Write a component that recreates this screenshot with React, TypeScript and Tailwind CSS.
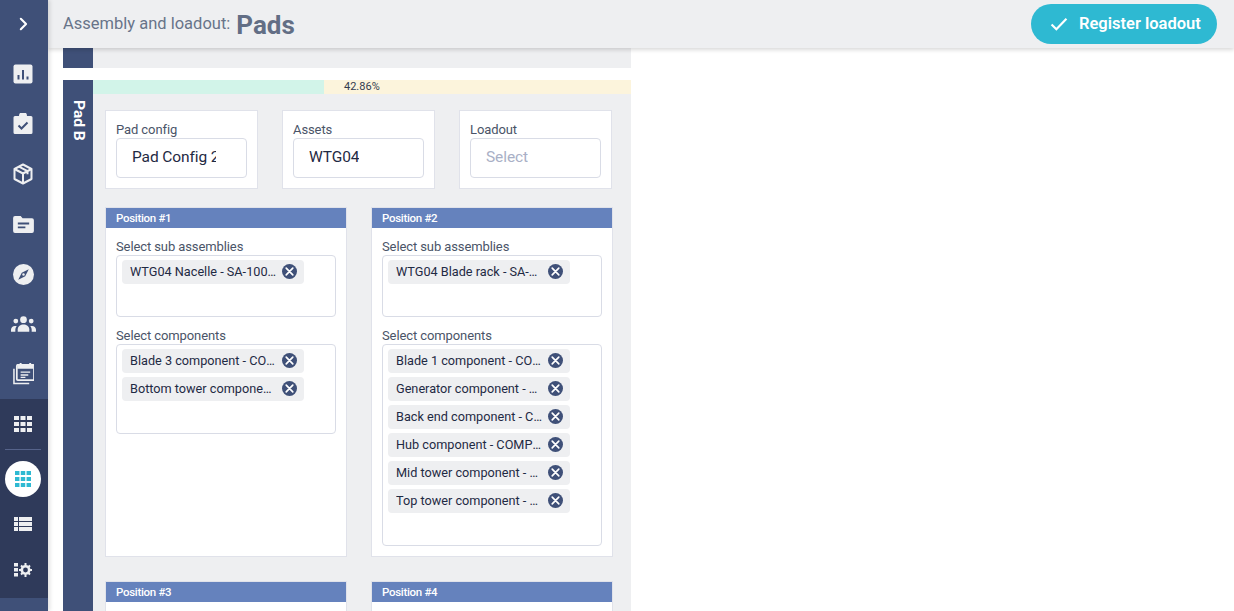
import { ReactNode } from "react";

const sans = "font-['Roboto',sans-serif]";

function Chip({ label }: { label: string }) {
  return (
    <div className="flex h-6 w-[182px] items-center justify-between gap-1 rounded bg-[#eeeff1] pl-2 pr-[7px]">
      <span className="truncate text-[12.700px] text-[#1f2a44]">{label}</span>
      <svg viewBox="0 0 16 16" className="h-[15px] w-[15px] shrink-0 -translate-y-px">
        <circle cx="8" cy="8" r="8" fill="#3f5078" />
        <path d="M4.500 4.500l7 7M11.500 4.500l-7 7" stroke="#fff" strokeWidth="1.800" strokeLinecap="round" />
      </svg>
    </div>
  );
}

function MultiSelect({ label, items, height }: { label: string; items: string[]; height: string }) {
  return (
    <div>
      <div className="pt-px text-[13px] leading-[17px] tracking-[-0.1px] text-[#4a5468]">{label}</div>
      <div className={`flex flex-col gap-1 rounded border border-[#d9dce6] bg-white pl-[5px] pt-1 ${height}`}>
        {items.map((item) => (
          <Chip key={item} label={item} />
        ))}
      </div>
    </div>
  );
}

function Position({ title, subs, comps, compHeight, tall }: { title: string; subs?: string[]; comps?: string[]; compHeight?: string; tall?: boolean }) {
  return (
    <div className={`w-[242px] border border-[#e0e2ea] bg-white ${tall ? "h-[350px]" : "h-[120px]"}`}>
      <div className="h-5 bg-[#6582bd] pl-2.5 text-[11.500px] font-medium leading-5 tracking-[-0.3px] text-white">{title}</div>
      {subs && comps && (
        <div className="flex flex-col gap-[9px] px-2.5 pt-[9px]">
          <MultiSelect label="Select sub assemblies" items={subs} height="h-[62px]" />
          <MultiSelect label="Select components" items={comps} height={compHeight ?? ""} />
        </div>
      )}
    </div>
  );
}

function ConfigSelect({ label, value, muted }: { label: string; value: string; muted?: boolean }) {
  return (
    <div className="h-[79px] w-[153px] border border-[#e0e2ea] bg-white px-2.5 pt-[9px]">
      <div className="pt-px text-[13px] leading-[17px] tracking-[-0.1px] text-[#4a5468]">{label}</div>
      <div className="flex h-10 items-center overflow-hidden rounded border border-[#d9dce6] pl-[15px] pr-[30px]">
        <span className={`overflow-hidden whitespace-nowrap text-[15.500px] tracking-[-0.1px] ${muted ? "text-[#a9b0c6]" : "text-[#1f2a44]"}`}>{value}</span>
      </div>
    </div>
  );
}

function NavIcon({ children }: { children: ReactNode }) {
  return <div className="flex h-[50.2px] items-center justify-center text-[#eeeff1]">{children}</div>;
}

const Grid = ({ color, className }: { color: string; className: string }) => (
  <svg viewBox="0 0 18 16" className={className} fill={color} preserveAspectRatio="none">
    {[0, 6, 12].map((y) =>
      [0, 6.5, 13].map((x) => <rect key={`${x}-${y}`} x={x} y={y} width="5" height="4" />)
    )}
  </svg>
);

function Sidebar() {
  return (
    <aside className="z-20 flex h-[611px] w-12 shrink-0 flex-col bg-[#3f5078] pr-[2px] shadow-[2px_0_4px_rgba(0,0,0,0.12)]">
      <div className="flex h-12 items-center justify-center text-white">
        <svg viewBox="0 0 12 16" className="h-[14px] w-[12px]" fill="none" stroke="currentColor" strokeWidth="2.400" strokeLinecap="round" strokeLinejoin="round">
          <path d="M3.500 2l6 6-6 6" />
        </svg>
      </div>
      <div className="flex h-[351px] flex-col pt-px">
        <NavIcon>
          <svg viewBox="0 0 20 20" className="h-5 w-5">
            <rect width="19" height="19" x="0.500" y="0.500" rx="2" fill="currentColor" />
            <path d="M5.500 11v4.500M10 6v9.500M14.500 12.500v3" stroke="#3f5078" strokeWidth="2" />
          </svg>
        </NavIcon>
        <NavIcon>
          <svg viewBox="0 0 20 22" className="h-[22px] w-5">
            <path d="M2 3h4a4 4 0 0 1 8 0h4a1.500 1.500 0 0 1 1.500 1.500v15A1.500 1.500 0 0 1 18 21H2a1.500 1.500 0 0 1-1.500-1.500v-15A1.500 1.500 0 0 1 2 3z" fill="currentColor" />
            <path d="M5.500 12.500l3 3 6-6" fill="none" stroke="#3f5078" strokeWidth="2" />
          </svg>
        </NavIcon>
        <NavIcon>
          <svg viewBox="0 0 20 22" className="h-[22px] w-5" fill="none" stroke="currentColor" strokeWidth="2" strokeLinejoin="round">
            <path d="M10 1.500l8.500 4.500v10L10 20.500 1.500 16V6z" />
            <path d="M1.500 6l8.500 4.500L18.500 6M10 10.500v10M6 3.700l8.500 4.500v3" />
          </svg>
        </NavIcon>
        <NavIcon>
          <svg viewBox="0 0 22 18" className="h-[17px] w-[21px]">
            <path d="M0 2a2 2 0 0 1 2-2h6l2 2.500h10a2 2 0 0 1 2 2V16a2 2 0 0 1-2 2H2a2 2 0 0 1-2-2z" fill="currentColor" />
            <path d="M5 8h12M5 12h8" stroke="#3f5078" strokeWidth="2" />
          </svg>
        </NavIcon>
        <NavIcon>
          <svg viewBox="0 0 22 22" className="h-[21px] w-[21px]">
            <circle cx="11" cy="11" r="11" fill="currentColor" />
            <path d="M16.500 5.500L12.800 12.800 5.500 16.500 9.200 9.200z" fill="#3f5078" />
            <circle cx="11" cy="11" r="1.300" fill="#eeeff1" />
          </svg>
        </NavIcon>
        <NavIcon>
          <svg viewBox="0 0 26 16" className="h-4 w-[25px]" fill="currentColor">
            <circle cx="13" cy="3.500" r="3.500" />
            <circle cx="5" cy="5" r="2.500" />
            <circle cx="21" cy="5" r="2.500" />
            <path d="M7 16v-2.500C7 10.500 10 8.500 13 8.500s6 2 6 5V16z" />
            <path d="M0 16v-2c0-2.500 2-4 4-4h2c-.8 1-1.500 2.300-1.500 4v2zM26 16v-2c0-2.500-2-4-4-4h-2c.8 1 1.500 2.300 1.500 4v2z" />
          </svg>
        </NavIcon>
        <NavIcon>
          <svg viewBox="0 0 22 23" className="h-[22px] w-[21px]">
            <path d="M5 2h16a1 1 0 0 1 1 1v14a1 1 0 0 1-1 1H5a1 1 0 0 1-1-1V3a1 1 0 0 1 1-1z" fill="none" stroke="currentColor" strokeWidth="1.800" />
            <path d="M4.500 1h17v5h-17z" fill="currentColor" />
            <path d="M8 0v3M18 0v3" stroke="currentColor" strokeWidth="2" />
            <path d="M8 9.500h10M8 12.500h8M8 15h5" stroke="currentColor" strokeWidth="1.500" />
            <path d="M1 6v15.500h16" fill="none" stroke="currentColor" strokeWidth="1.600" />
          </svg>
        </NavIcon>
      </div>
      <div className="-mr-[2px] flex h-[199px] flex-col items-center bg-[#2f3a5a] pr-[2px]">
        <div className="flex h-[50px] shrink-0 items-center justify-center">
          <Grid color="#eeeff1" className="h-4 w-[18px]" />
        </div>
        <div className="h-px w-9 shrink-0 bg-[#56638a]" />
        <div className="mt-[11px] flex h-9 w-9 shrink-0 items-center justify-center rounded-full bg-white">
          <Grid color="#2eb9d2" className="h-4 w-4" />
        </div>
        <div className="flex h-[50px] shrink-0 items-center justify-center pt-1">
          <svg viewBox="0 0 18 14" className="h-[14px] w-[18px]" fill="#eeeff1">
            {[0, 5, 10].map((y) => (
              <g key={y}>
                <rect x="0" y={y} width="4" height="4" />
                <rect x="5" y={y} width="13" height="4" />
              </g>
            ))}
          </svg>
        </div>
        <div className="flex h-[42px] shrink-0 items-center justify-center pt-1">
          <svg viewBox="0 0 18 14" className="h-[14px] w-[18px]" fill="#eeeff1">
            <rect x="0" y="0" width="4" height="3.500" />
            <rect x="0" y="5" width="4" height="3.500" />
            <rect x="0" y="10" width="4" height="3.500" />
            <circle cx="11.500" cy="7" r="3.700" fill="none" stroke="#eeeff1" strokeWidth="2.600" />
            <path d="M11.500 0v2.500M11.500 11.500V14M5 7h2.500M15.500 7H18M7 2.500l1.800 1.800M14.200 9.700L16 11.500M16 2.500l-1.800 1.800M8.800 9.700L7 11.500" stroke="#eeeff1" strokeWidth="2" />
          </svg>
        </div>
      </div>
    </aside>
  );
}

export default function App() {
  return (
    <div className={`flex h-[611px] w-[1234px] overflow-hidden bg-white ${sans}`}>
      <Sidebar />
      <div className="flex min-w-0 flex-1 flex-col">
        <header className="z-10 flex h-12 shrink-0 items-center justify-between bg-[#eeeff1] pl-[15px] pr-[17px] shadow-[0_2px_4px_rgba(0,0,0,0.15)]">
          <div className="flex items-center gap-1.5 pt-px">
            <span className="text-[16.500px] text-[#687489]">Assembly and loadout:</span>
            <span className="text-[26px] font-bold leading-none text-[#626e85]">Pads</span>
          </div>
          <button className="flex h-10 w-[186px] items-center gap-[11px] rounded-full bg-[#2eb9d2] pl-[19px] text-[16.500px] font-semibold text-white">
            <svg viewBox="0 0 20 16" className="h-[14px] w-[18px]" fill="none" stroke="currentColor" strokeWidth="2.500">
              <path d="M1.500 8.500l5.500 5.500L18.500 2" />
            </svg>
            Register loadout
          </button>
        </header>
        <main className="min-h-0 flex-1 overflow-hidden pl-[15px]">
          <div className="flex h-5 w-[568px]">
            <div className="w-[30px] bg-[#3f5078]" />
            <div className="flex-1 bg-[#eeeff1]" />
          </div>
          <div className="mt-3 flex w-[568px]">
            <div className="flex w-[30px] shrink-0 justify-center bg-[#3f5078] pl-px pt-5">
              <span className="text-[15.500px] font-bold leading-[30px] text-white [writing-mode:vertical-rl]">Pad B</span>
            </div>
            <div className="flex-1 bg-[#eeeff1]">
              <div className="relative flex h-3.5 bg-[#fcf4dc]">
                <div className="w-[42.86%] bg-[#d2f4e9]" />
                <span className="absolute left-[251px] top-0 text-[11px] leading-[14px] text-[#333c50]">42.86%</span>
              </div>
              <div className="px-3 pb-6 pt-4">
                <div className="flex justify-between pr-[7px]">
                  <ConfigSelect label="Pad config" value="Pad Config 2" />
                  <ConfigSelect label="Assets" value="WTG04" />
                  <ConfigSelect label="Loadout" value="Select" muted />
                </div>
                <div className="mt-[18px] grid grid-cols-[242px_242px] gap-x-6 gap-y-6">
                  <Position
                    tall
                    title="Position #1"
                    subs={["WTG04 Nacelle - SA-1001-01"]}
                    comps={["Blade 3 component - COMP-1", "Bottom tower component - COMP"]}
                    compHeight="h-[90px]"
                  />
                  <Position
                    tall
                    title="Position #2"
                    subs={["WTG04 Blade rack - SA-1002"]}
                    comps={[
                      "Blade 1 component - COMP-1",
                      "Generator component - COMP",
                      "Back end component - COMP",
                      "Hub component - COMP-1004",
                      "Mid tower component - COMP",
                      "Top tower component - COMP",
                    ]}
                    compHeight="h-[202px]"
                  />
                  <Position title="Position #3" />
                  <Position title="Position #4" />
                </div>
              </div>
            </div>
          </div>
        </main>
      </div>
    </div>
  );
}
